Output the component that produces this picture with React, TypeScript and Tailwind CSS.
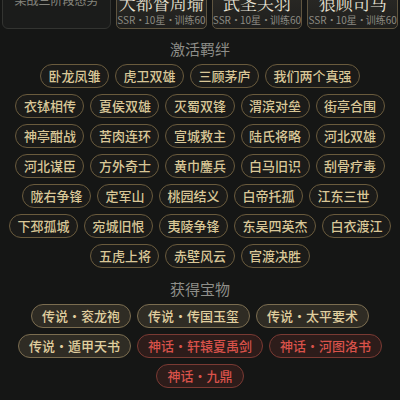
import React from "react";

const bonds: string[] = [
  "卧龙凤雏", "虎卫双雄", "三顾茅庐", "我们两个真强",
  "衣钵相传", "夏侯双雄", "灭蜀双锋", "渭滨对垒", "街亭合围",
  "神亭酣战", "苦肉连环", "宣城救主", "陆氏将略", "河北双雄",
  "河北谋臣", "方外奇士", "黄巾鏖兵", "白马旧识", "刮骨疗毒",
  "陇右争锋", "定军山", "桃园结义", "白帝托孤", "江东三世",
  "下邳孤城", "宛城旧恨", "夷陵争锋", "东吴四英杰", "白衣渡江",
  "五虎上将", "赤壁风云", "官渡决胜",
];

type Treasure = { tier: "传说" | "神话"; name: string };

const treasures: Treasure[] = [
  { tier: "传说", name: "衮龙袍" },
  { tier: "传说", name: "传国玉玺" },
  { tier: "传说", name: "太平要术" },
  { tier: "传说", name: "遁甲天书" },
  { tier: "神话", name: "轩辕夏禹剑" },
  { tier: "神话", name: "河图洛书" },
  { tier: "神话", name: "九鼎" },
];

const heroes = ["大都督周瑜", "武圣关羽", "狼顾司马"];

function HeroCard({ name }: { name: string }) {
  return (
    <div className="flex-1 min-w-0 h-[41px] rounded-[5px] border border-[#5f5540] bg-gradient-to-b from-[#2b2a26] to-[#1f1f1d] flex flex-col items-center pt-[5px] overflow-hidden">
      <div
        className="text-[17px] leading-[18px] text-[#e7e2d4] whitespace-nowrap"
        style={{ fontFamily: '"Noto Serif CJK SC", "Noto Sans CJK SC", serif' }}
      >
        {name}
      </div>
      <div className="mt-[1px] text-[10px] leading-[13px] text-[#8c8a82] whitespace-nowrap flex items-center">
        <span>SSR</span>
        <span className="inline-block w-[9px] text-center">·</span>
        <span>10星</span>
        <span className="inline-block w-[9px] text-center">·</span>
        <span>训练60</span>
      </div>
    </div>
  );
}

export default function App() {
  return (
    <div
      className="w-[400px] h-[400px] overflow-hidden bg-[#151615]"
      style={{ fontFamily: '"Noto Sans CJK SC", "Noto Sans", sans-serif' }}
    >
      <div className="flex gap-[5px] px-[2px] mt-[-12px]">
        <div className="w-[109px] shrink-0 h-[41px] rounded-[6px] border border-[#333431] bg-[#1b1c1b] flex justify-center pt-[3px]">
          <div className="text-[12px] leading-[16px] text-[#86867f] whitespace-nowrap">
            某战三阶段态势
          </div>
        </div>
        {heroes.map((h) => (
          <HeroCard key={h} name={h} />
        ))}
      </div>

      <div className="mt-[10px] h-[20px] text-center text-[15px] leading-[20px] text-[#8e8e89]">
        激活羁绊
      </div>

      <div className="mt-[5px] px-[8px] flex flex-wrap justify-center gap-x-[6px] gap-y-[6px]">
        {bonds.map((b) => (
          <div
            key={b}
            className="h-[24px] px-[7.5px] rounded-full border border-[#6a5b3d] bg-[#1b1b19] flex items-center text-[13px] leading-[16px] font-medium text-[#d9c797] whitespace-nowrap"
          >
            {b}
          </div>
        ))}
      </div>

      <div className="mt-[11px] h-[20px] text-center text-[15px] leading-[20px] text-[#8e8e89]">
        获得宝物
      </div>

      <div className="mt-[5px] px-[8px] flex flex-wrap justify-center gap-x-[6px] gap-y-[6px]">
        {treasures.map((t) =>
          t.tier === "传说" ? (
            <div
              key={t.name}
              className="h-[24px] px-[10px] rounded-full border border-[#7b6d50] bg-[#2f2c24] flex items-center text-[13px] leading-[16px] font-medium text-[#e0cf9f] whitespace-nowrap"
            >
              <span>{t.tier}</span>
              <span className="inline-block w-[13px] text-center">·</span>
              <span>{t.name}</span>
            </div>
          ) : (
            <div
              key={t.name}
              className="h-[24px] px-[10px] rounded-full border border-[#7a3a33] bg-[#2d1c1a] flex items-center text-[13px] leading-[16px] font-medium text-[#d9524a] whitespace-nowrap"
            >
              <span>{t.tier}</span>
              <span className="inline-block w-[13px] text-center">·</span>
              <span>{t.name}</span>
            </div>
          )
        )}
      </div>
    </div>
  );
}
